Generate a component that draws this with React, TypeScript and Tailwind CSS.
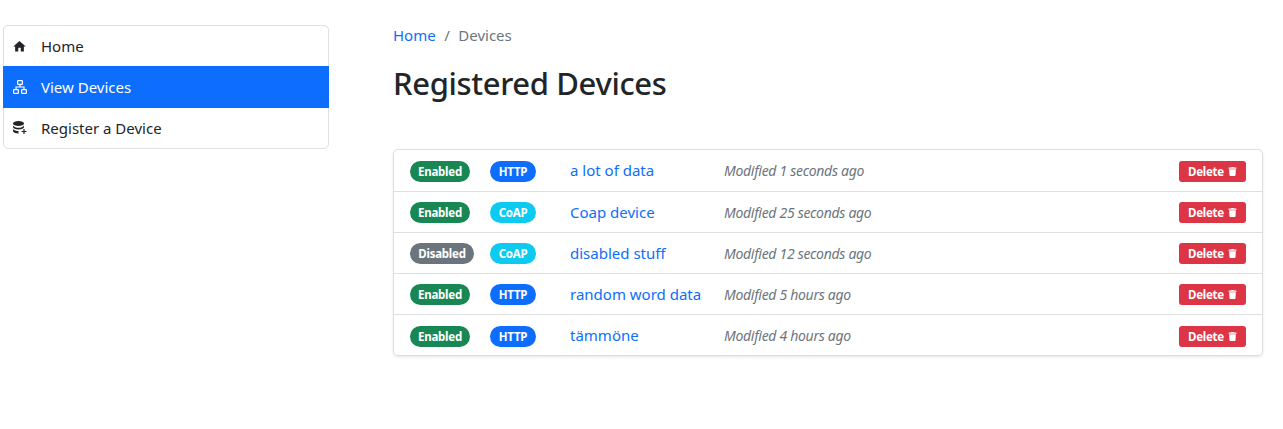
import React from 'react';
import { MdHome } from 'react-icons/md';
import { FaTrash } from 'react-icons/fa';

const font = "font-['Noto_Sans','Open_Sans',sans-serif]";

const devices = [
  { state: 'Enabled', proto: 'HTTP', name: 'a lot of data', modified: 'Modified 1 seconds ago' },
  { state: 'Enabled', proto: 'CoAP', name: 'Coap device', modified: 'Modified 25 seconds ago' },
  { state: 'Disabled', proto: 'CoAP', name: 'disabled stuff', modified: 'Modified 12 seconds ago' },
  { state: 'Enabled', proto: 'HTTP', name: 'random word data', modified: 'Modified 5 hours ago' },
  { state: 'Enabled', proto: 'HTTP', name: 'tämmöne', modified: 'Modified 4 hours ago' },
];

const DiagramIcon = () => (
  <svg width="14" height="14" viewBox="0 0 14 14" fill="none" stroke="currentColor" strokeWidth="1.2">
    <rect x="4.6" y="0.6" width="4.8" height="3.8" rx="0.6" />
    <path d="M7 4.4V7M3 9.6V7h8v2.6" />
    <rect x="0.6" y="9.6" width="4.8" height="3.8" rx="0.6" />
    <rect x="8.6" y="9.6" width="4.8" height="3.8" rx="0.6" />
  </svg>
);

const DatabaseAddIcon = () => (
  <svg width="14" height="14" viewBox="0 0 14 14" fill="currentColor">
    <ellipse cx="5.5" cy="2.5" rx="5.5" ry="2.5" />
    <path d="M0 4.5c1 1.6 3.5 2.3 5.5 2.3s4.5-.7 5.5-2.3V6c0 1.4-2.5 2.5-5.5 2.5S0 7.4 0 6z" />
    <path d="M0 8c1 1.4 3.5 2 5.5 2v2.5C2.5 12.5 0 11.4 0 10z" />
    <path d="M11 8v5M8.5 10.5h5" fill="none" stroke="currentColor" strokeWidth="1.2" />
  </svg>
);

const App: React.FC = () => {
  return (
    <div className={`${font} flex h-[429px] w-[1283px] gap-[64px] bg-white pl-[3px] text-[#212529]`}>
      {/* sidebar */}
      <nav className="mt-[25px] flex h-[124px] w-[326px] flex-col rounded-[5px] border border-[#dfdfdf] text-[15px]">
        <a className="flex h-[41px] items-center gap-[14px] pl-[8px]">
          <MdHome size={15} />
          Home
        </a>
        <a className="-mx-[1px] flex h-[42px] items-center gap-[14px] bg-[#0d6efd] pl-[10px] text-white">
          <DiagramIcon />
          View Devices
        </a>
        <a className="flex h-[41px] items-center gap-[14px] pl-[9px]">
          <DatabaseAddIcon />
          Register a Device
        </a>
      </nav>

      {/* main column */}
      <main className="w-[870px]">
        <div className="mt-[25px] flex h-[21px] items-center gap-[8.5px] text-[15px] text-[#6c757d]">
          <a className="text-[#0d6efd]">Home</a>
          <span>/</span>
          <span>Devices</span>
        </div>
        <h1 className="mt-[15px] h-[44px] text-[31px] leading-[44px] font-medium tracking-[-0.36px]">Registered Devices</h1>

        <div className="mt-[44px] overflow-hidden rounded-[5px] border border-[#dfdfdf] shadow-[0_1px_3px_rgba(0,0,0,0.1)]">
          {devices.map((d) => (
            <div
              key={d.name}
              className="group flex h-[41px] items-center border-b border-[#dfdfdf] pt-[1px] pr-[16px] pl-[16px] first:h-[42px] first:pt-[2px] last:h-[40px] last:border-b-0 last:pt-[3px]"
            >
              <div className="flex w-[80px]">
                <span className={`flex h-[21px] items-center justify-center rounded-full pt-[1px] text-[11.5px] font-bold tracking-[-0.25px] text-white ${d.state === 'Enabled' ? 'w-[60px] bg-[#198754]' : 'w-[64px] bg-[#6c757d]'}`}>
                  {d.state}
                </span>
              </div>
              <div className="flex w-[80px]">
                <span className={`flex h-[21px] w-[46px] items-center justify-center rounded-full pt-[1px] text-[11.5px] font-bold tracking-[-0.25px] text-white ${d.proto === 'HTTP' ? 'bg-[#0d6efd]' : 'bg-[#0dcaf0]'}`}>
                  {d.proto}
                </span>
              </div>
              <a className="w-[154px] text-[15px] whitespace-nowrap text-[#0d6efd] group-first:-mt-[2px] group-last:-mt-[2px]">{d.name}</a>
              <span className="text-[14px] tracking-[-0.3px] text-[#6c757d] italic group-first:-mt-[2px] group-last:-mt-[2px]">{d.modified}</span>
              <button className="ml-auto flex h-[21px] w-[67px] items-center justify-center gap-[4px] rounded-[3px] bg-[#dc3545] text-[11.5px] font-bold tracking-[-0.25px] text-white">
                Delete
                <FaTrash size={9} />
              </button>
            </div>
          ))}
        </div>
      </main>
    </div>
  );
};

export default App;
